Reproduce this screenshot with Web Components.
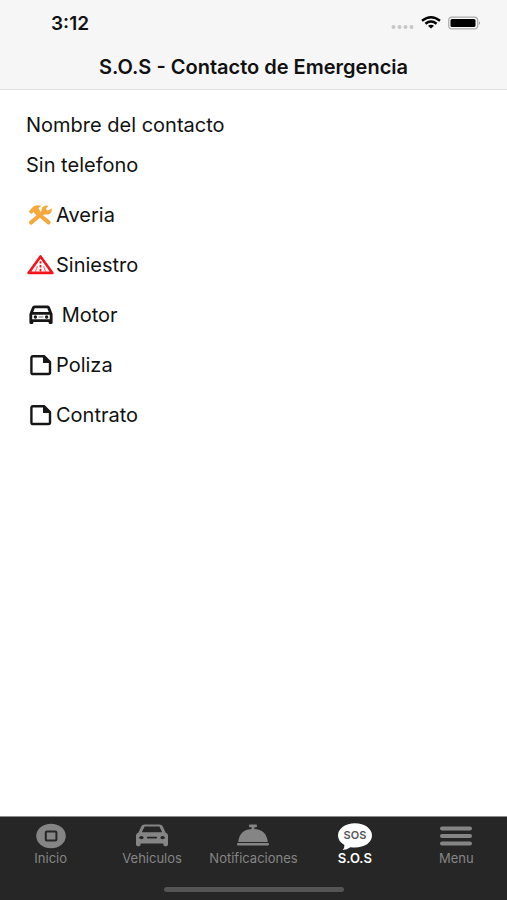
<!DOCTYPE html>
<html lang="es">
<head>
<meta charset="utf-8">
<meta name="viewport" content="width=device-width, initial-scale=1">
<title>S.O.S - Contacto de Emergencia</title>
<style>
    html, body {
        height: 100%;
    }
    body {
        margin: 0;
        font-family: Inter, "Liberation Sans", sans-serif;
        color: #111;
        background: #fff;
    }
</style>
</head>
<body>
<sos-screen>
    <status-bar slot="top" time="3:12"></status-bar>
    <nav-header slot="top">S.O.S - Contacto de Emergencia</nav-header>

    <contact-line>Nombre del contacto</contact-line>
    <contact-line>Sin telefono</contact-line>
    <action-list>
        <action-row icon="tools">Averia</action-row>
        <action-row icon="warning">Siniestro</action-row>
        <action-row icon="car">&nbsp;Motor</action-row>
        <action-row icon="file">Poliza</action-row>
        <action-row icon="file">Contrato</action-row>
    </action-list>

    <tab-bar slot="bottom">
        <tab-item icon="home" href="#inicio">Inicio</tab-item>
        <tab-item icon="vehicle" href="#vehiculos">Vehiculos</tab-item>
        <tab-item icon="bell" href="#notificaciones">Notificaciones</tab-item>
        <tab-item icon="sos" href="#sos" active>S.O.S</tab-item>
        <tab-item icon="menu" href="#menu">Menu</tab-item>
    </tab-bar>
</sos-screen>

<script>
// icons of the list, all on a 30x26 box
const ROW_ICONS = {
    tools: `
        <g fill="none" stroke="#f5a83c">
            <path d="M10 10L22.6 20.4" stroke-width="4" stroke-linecap="round"/>
            <path d="M5 20.6L18 9.6" stroke-width="4" stroke-linecap="round"/>
        </g>
        <path fill="#f5a83c" d="M2.6 9.4L7.4 4.6Q11 2.4 15.4 3.8L12.4 6.2L14.5 9.5L10.5 13L7.6 10L5.2 12Z"/>
        <path fill="#f5a83c" d="M15.5 9.5Q14.8 4.6 20 3.6L22.6 3.8L19.8 6.8L21.8 8.8L25.6 6.2Q26.6 12 21.4 12.6L17.5 12.5Z"/>`,
    warning: `
        <path d="M14.5 4.4L26.4 20.9H2.6Z" fill="none" stroke="#f4151b" stroke-width="2.6" stroke-linejoin="round"/>
        <path d="M14.5 9.2V11.6M14.5 13V15.4M14.5 16.8V19.6" stroke="#f4151b" stroke-width="1.8"/>
        <path d="M11.4 14.4L9.4 19.6M17.6 14.4L19.6 19.6" stroke="#f4151b" stroke-width="1.2" opacity=".6"/>`,
    car: `
        <path fill="#161616" fill-rule="evenodd" d="M8.4 3.6H21.6Q23.4 3.6 24 5.2L26.6 12V20.5Q26.6 22 25 22H24Q22.6 22 22.6 20.5V19.9H7.4V20.5Q7.4 22 6 22H5Q3.4 22 3.4 20.5V12L6 5.2Q6.6 3.6 8.4 3.6ZM8.7 6.3L7.2 10H22.8L21.3 6.3ZM6.2 12.8V17.2H23.8V12.8Z"/>
        <circle cx="9.4" cy="15" r="1.7" fill="#161616"/>
        <circle cx="20.6" cy="15" r="1.7" fill="#161616"/>
        <path d="M12.5 15H17.5" stroke="#999" stroke-width="1.4"/>`,
    file: `
        <path d="M7 4.2H18L24 10V20.5Q24 22 22.4 22H7Q5.4 22 5.4 20.4V5.8Q5.4 4.2 7 4.2Z" fill="none" stroke="#161616" stroke-width="2.4" stroke-linejoin="round"/>
        <path d="M17 3.6L25 11H17Z" fill="#161616"/>`
};

// icons of the tab bar, all on a 36x28 box, drawn in the colour of the tab
const TAB_ICONS = {
    home: `
        <ellipse cx="18" cy="14" rx="14.8" ry="12.2" fill="currentColor"/>
        <rect x="12.8" y="9.6" width="10.6" height="8.8" rx="1" fill="none" stroke="#262626" stroke-width="2"/>`,
    vehicle: `
        <path fill="currentColor" fill-rule="evenodd" d="M10.5 2.6H25.5Q28 2.6 28.8 4.6L31.5 10.4Q34 11.2 34 13.6V22.4Q34 24.2 32.2 24.2H31Q29.4 24.2 29.4 22.4V21.4H6.6V22.4Q6.6 24.2 5 24.2H3.8Q2 24.2 2 22.4V13.6Q2 11.2 4.5 10.4L7.2 4.6Q8 2.6 10.5 2.6ZM10.6 4.6L7.8 10.2H28.2L25.4 4.6Z"/>
        <ellipse cx="7.4" cy="15.6" rx="2.2" ry="1.6" fill="#262626"/>
        <ellipse cx="28.6" cy="15.6" rx="2.2" ry="1.6" fill="#262626"/>
        <path d="M13.6 15.6H22.4" stroke="#262626" stroke-width="1.6" stroke-linecap="round"/>`,
    bell: `
        <g fill="currentColor">
            <rect x="14" y="2.6" width="8" height="2.6" rx="1"/>
            <rect x="16.6" y="4" width="2.8" height="4"/>
            <path d="M3.2 20Q4.6 7 18 7T32.8 20Z"/>
            <rect x="2" y="21" width="32" height="2.6" rx="1.3"/>
        </g>`,
    sos: `
        <path fill="currentColor" d="M18 1.2C27.6 1.2 35 6.6 35 13.6S27.6 25.6 18 25.6Q15.6 25.6 13.4 25.2Q10 27.8 5.6 28Q7.8 25.6 7.4 23Q1 19.4 1 13.6C1 6.6 8.4 1.2 18 1.2Z"/>
        <text x="18" y="17" text-anchor="middle" font-size="11" font-weight="600" fill="#555">SOS</text>`,
    menu: `
        <path d="M4 6.4H32M4 14H32M4 21.6H32" stroke="currentColor" stroke-width="4" stroke-linecap="round"/>`
};

class SosScreen extends HTMLElement {
    constructor() {
        super();
        this.attachShadow({mode: 'open'});
        this.shadowRoot.innerHTML = `
            <style>
                :host {
                    display: flex;
                    flex-direction: column;
                    min-height: 100%;
                }
                header {
                    background: #f7f6f7;
                    border-bottom: 1px solid #e2e2e3;
                }
                main {
                    flex: 1;
                    padding: 15px 26px;
                }
            </style>
            <header><slot name="top"></slot></header>
            <main><slot></slot></main>
            <slot name="bottom"></slot>
        `;
    }
}

class StatusBar extends HTMLElement {
    constructor() {
        super();
        this.attachShadow({mode: 'open'});
        this.shadowRoot.innerHTML = `
            <style>
                :host {
                    display: flex;
                    align-items: center;
                    justify-content: space-between;
                    height: 46px;
                    padding: 0 26px 0 51px;
                }
                time {
                    font-size: 19px;
                    font-weight: 600;
                }
                svg {
                    display: block;
                }
            </style>
            <time></time>
            <svg width="91" height="16" viewBox="0 0 91 16" aria-hidden="true">
                <g fill="#c6c6c8">
                    <circle cx="3.5" cy="12" r="2"/>
                    <circle cx="9.5" cy="12" r="2"/>
                    <circle cx="15.5" cy="12" r="2"/>
                    <circle cx="21.5" cy="12" r="2"/>
                </g>
                <g fill="none" stroke="#000" stroke-width="2.4">
                    <path d="M32 5.8Q41 -1.2 50 5.8"/>
                    <path d="M35.4 8.8Q41 4.4 46.6 8.8"/>
                </g>
                <path d="M38 10.8Q41 8.6 44 10.8L41 13.6Z"/>
                <rect x="58.7" y="2.2" width="29" height="11.6" rx="3.4" fill="#f7f6f7" stroke="#aaa" stroke-width="1.2"/>
                <rect x="60.5" y="4" width="25" height="8" rx="1.6"/>
                <path d="M89 6.2Q91 8 89 9.8Z" fill="#999"/>
            </svg>
        `;
    }

    connectedCallback() {
        this.shadowRoot.querySelector('time').textContent = this.getAttribute('time');
    }
}

class NavHeader extends HTMLElement {
    constructor() {
        super();
        this.attachShadow({mode: 'open'});
        this.shadowRoot.innerHTML = `
            <style>
                :host {
                    display: block;
                }
                h1 {
                    margin: 0;
                    line-height: 43px;
                    font-size: 20px;
                    font-weight: 600;
                    text-align: center;
                }
            </style>
            <h1><slot></slot></h1>
        `;
    }
}

class ContactLine extends HTMLElement {
    constructor() {
        super();
        this.attachShadow({mode: 'open'});
        this.shadowRoot.innerHTML = `
            <style>
                :host {
                    display: block;
                    font-size: 20px;
                    line-height: 40px;
                }
            </style>
            <slot></slot>
        `;
    }
}

class ActionList extends HTMLElement {
    constructor() {
        super();
        this.attachShadow({mode: 'open'});
        this.shadowRoot.innerHTML = `
            <style>
                :host {
                    display: flex;
                    flex-direction: column;
                    padding-top: 5px;
                }
            </style>
            <slot></slot>
        `;
    }
}

class ActionRow extends HTMLElement {
    constructor() {
        super();
        this.attachShadow({mode: 'open'});
        this.shadowRoot.innerHTML = `
            <style>
                :host {
                    display: block;
                }
                button {
                    display: flex;
                    align-items: center;
                    width: 100%;
                    height: 50px;
                    padding: 0;
                    border: 0;
                    background: none;
                    color: inherit;
                    font: inherit;
                    font-size: 20px;
                    text-align: left;
                    cursor: pointer;
                }
                svg {
                    flex: none;
                }
            </style>
            <button type="button">
                <svg width="30" height="26" viewBox="0 0 30 26" aria-hidden="true"></svg>
                <span><slot></slot></span>
            </button>
        `;
    }

    connectedCallback() {
        this.shadowRoot.querySelector('svg').innerHTML = ROW_ICONS[this.getAttribute('icon')];
    }
}

class TabBar extends HTMLElement {
    constructor() {
        super();
        this.attachShadow({mode: 'open'});
        this.shadowRoot.innerHTML = `
            <style>
                :host {
                    display: block;
                    background: #262626;
                    border-top: 1px solid #8a8a8a;
                }
                nav {
                    display: grid;
                    grid-template-columns: repeat(5, 1fr);
                    padding: 5px 0 21px;
                }
                /* home indicator */
                .handle {
                    width: 180px;
                    height: 5px;
                    margin: 0 auto;
                    border-radius: 3px;
                    background: #545454;
                }
                .foot {
                    padding-bottom: 8px;
                }
            </style>
            <nav><slot></slot></nav>
            <div class="foot"><div class="handle"></div></div>
        `;
    }
}

class TabItem extends HTMLElement {
    constructor() {
        super();
        this.attachShadow({mode: 'open'});
        this.shadowRoot.innerHTML = `
            <style>
                :host {
                    display: block;
                    color: #858585;
                }
                :host([active]) {
                    color: #fff;
                }
                a {
                    display: flex;
                    flex-direction: column;
                    align-items: center;
                    color: inherit;
                    font-size: 13px;
                    line-height: 16px;
                    text-decoration: none;
                }
                :host([active]) span {
                    font-weight: 600;
                }
            </style>
            <a>
                <svg width="36" height="28" viewBox="0 0 36 28" aria-hidden="true"></svg>
                <span><slot></slot></span>
            </a>
        `;
    }

    connectedCallback() {
        const link = this.shadowRoot.querySelector('a');
        link.href = this.getAttribute('href');
        if(this.hasAttribute('active')) {
            link.setAttribute('aria-current', 'page');
        }
        this.shadowRoot.querySelector('svg').innerHTML = TAB_ICONS[this.getAttribute('icon')];
    }
}

customElements.define('sos-screen', SosScreen);
customElements.define('status-bar', StatusBar);
customElements.define('nav-header', NavHeader);
customElements.define('contact-line', ContactLine);
customElements.define('action-list', ActionList);
customElements.define('action-row', ActionRow);
customElements.define('tab-bar', TabBar);
customElements.define('tab-item', TabItem);
</script>
</body>
</html>
